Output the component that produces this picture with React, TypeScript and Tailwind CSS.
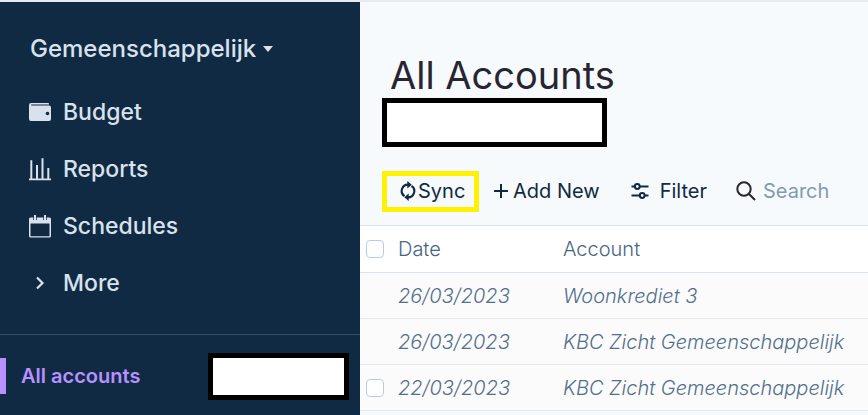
import type { ReactNode } from 'react';

function WalletIcon() {
  return (
    <svg className="h-[22px] w-[22px]" viewBox="0 0 22 22" fill="currentColor" aria-hidden="true">
      <path d="M2 1h17.200a.9.9 0 0 1 .8.9v.6H2.200v1H20a2 2 0 0 1 2 2V17a2 2 0 0 1-2 2H2a2 2 0 0 1-2-2V3a2 2 0 0 1 2-2z" />
      <circle cx="18.500" cy="11.500" r="1.800" fill="#102a43" />
    </svg>
  );
}

function ReportsIcon() {
  return (
    <svg className="h-[22px] w-[22px] overflow-visible" viewBox="0 0 22 22" fill="currentColor" aria-hidden="true">
      <path d="M0 19.500h22v1.800H0zM1.300 1.300h2v18.500h-2zM7 6h2v14H7zM12.500-.8h2v20.500h-2zM18.300 9h2v11h-2z" />
    </svg>
  );
}

function CalendarIcon() {
  return (
    <svg className="h-[22px] w-[22px] overflow-visible" viewBox="0 0 22 22" aria-hidden="true">
      <path
        fill="currentColor"
        fillRule="evenodd"
        d="M1.500 1.500H4.300V4h3.400V1.500h6.600V4h3.400V1.500h2.800A1.500 1.500 0 0 1 22 3v17a1.500 1.500 0 0 1-1.500 1.500h-19A1.500 1.500 0 0 1 0 20V3A1.500 1.500 0 0 1 1.500 1.500zM1.500 7.500v12.700h19V7.500z"
      />
      <path fill="currentColor" d="M5-1h2v5.500H5zM15-1h2v5.500h-2z" />
    </svg>
  );
}

function ChevronIcon() {
  return (
    <svg className="h-[22px] w-[22px]" viewBox="0 0 22 22" fill="none" stroke="currentColor" strokeWidth="2.200" aria-hidden="true">
      <path d="M8 4.500l5.500 5.500L8 15.500" />
    </svg>
  );
}

function SyncIcon() {
  return (
    <svg className="h-5 w-4" viewBox="0 0 16 20" aria-hidden="true">
      <g fill="none" stroke="currentColor" strokeWidth="2.100">
        <path d="M4.500 15.200A6.300 6.300 0 0 1 8.500 3.700" />
        <path d="M11.500 4.800A6.300 6.300 0 0 1 7.500 16.300" />
      </g>
      <path fill="currentColor" d="M7.300 0l4.400 3.700-4.400 3.700zM8.700 12.600l-4.400 3.700L8.700 20z" />
    </svg>
  );
}

function PlusIcon() {
  return (
    <svg className="h-4 w-4" viewBox="0 0 16 16" stroke="currentColor" strokeWidth="2" aria-hidden="true">
      <path d="M8 1v14M1 8h14" />
    </svg>
  );
}

function FilterIcon() {
  return (
    <svg className="h-[18px] w-[18px]" viewBox="0 0 18 18" fill="none" stroke="currentColor" strokeWidth="2" aria-hidden="true">
      <path d="M.5 4.500h3.300M8.800 4.500h8.700M.5 13.500h8.200M13.700 13.500h3.800" />
      <circle cx="6.300" cy="4.500" r="2.400" />
      <circle cx="11.200" cy="13.500" r="2.400" />
    </svg>
  );
}

function SearchIcon() {
  return (
    <svg className="h-5 w-5 shrink-0" viewBox="0 0 20 20" fill="none" stroke="currentColor" strokeWidth="2" aria-hidden="true">
      <circle cx="8" cy="8" r="6.700" />
      <path d="M12.700 12.700L19 19" />
    </svg>
  );
}

function NavItem({ icon, label }: { icon: ReactNode; label: string }) {
  return (
    <li>
      <a href="#" className="flex h-[57px] items-center gap-3 pl-[29px] text-[23px] font-medium">
        {icon}
        {label}
      </a>
    </li>
  );
}

function Check({ label }: { label: string }) {
  return (
    <input
      type="checkbox"
      aria-label={label}
      className="block h-[18px] w-[18px] appearance-none rounded border border-[#bcccdc] bg-white"
    />
  );
}

const rows = [
  { date: '26/03/2023', account: 'Woonkrediet 3', selectable: false },
  { date: '26/03/2023', account: 'KBC Zicht Gemeenschappelijk', selectable: false },
  { date: '22/03/2023', account: 'KBC Zicht Gemeenschappelijk', selectable: true },
];

export default function App() {
  return (
    <div className="flex min-h-screen border-t-2 border-[#e8ecf0] bg-[#f6fafd] font-['Inter',sans-serif]">
      <aside className="w-[360px] shrink-0 bg-[#102a43] text-[#d9e2ec]">
        <button type="button" className="mt-6 flex h-[46px] items-center gap-[7px] pl-[30px] text-2xl font-medium">
          Gemeenschappelijk
          <svg className="h-[6px] w-[10px]" viewBox="0 0 10 6" fill="currentColor" aria-hidden="true">
            <path d="M0 0h10L5 6z" />
          </svg>
        </button>
        <nav className="mt-3">
          <ul>
            <NavItem icon={<WalletIcon />} label="Budget" />
            <NavItem icon={<ReportsIcon />} label="Reports" />
            <NavItem icon={<CalendarIcon />} label="Schedules" />
            <NavItem icon={<ChevronIcon />} label="More" />
          </ul>
        </nav>
        <div className="mt-[22px] flex items-start justify-between border-t border-[#334e68] pt-[18px] pr-[11px]">
          <a
            href="#"
            className="mt-[5px] flex h-9 items-center border-l-6 border-[#b990ff] pl-[15px] text-xl font-semibold text-[#b990ff]"
          >
            All accounts
          </a>
          <div className="h-[47px] w-[141px] border-5 border-black bg-white" />
        </div>
      </aside>

      <main className="min-w-0 flex-1 text-[#102a43]">
        <h1 className="pt-[50px] pl-[30px] text-[38px] leading-[46px] text-[#272630]">All Accounts</h1>
        <div className="ml-[22px] h-[49px] w-[225px] border-5 border-black bg-white" />
        <div className="mt-6 flex h-[41px] items-center pl-[22px] text-xl leading-6">
          <button type="button" className="flex h-full w-[97px] items-center gap-[2px] border-5 border-[#fff200] pb-[2px] pl-[13px]">
            <SyncIcon />
            Sync
          </button>
          <button type="button" className="ml-[14px] flex items-center gap-1 pb-[2px]">
            <PlusIcon />
            Add New
          </button>
          <button type="button" className="ml-[31px] flex items-center gap-[11px] pb-[2px]">
            <FilterIcon />
            Filter
          </button>
          <label className="ml-[29px] flex min-w-0 flex-1 items-center gap-[7px] pb-[2px] text-[#272630]">
            <SearchIcon />
            <input
              type="text"
              aria-label="Search"
              placeholder="Search"
              className="w-full min-w-0 bg-transparent placeholder:text-[#829ab1]"
            />
          </label>
        </div>

        <table className="mt-[13px] w-full table-fixed border-collapse text-left text-xl">
          <thead>
            <tr className="h-[47px] border-y border-[#d9e2ec] bg-white text-[#486581]">
              <th className="w-[38px] pl-[6px]">
                <Check label="Select all" />
              </th>
              <th className="w-[165px] font-light">Date</th>
              <th className="font-light">Account</th>
            </tr>
          </thead>
          <tbody>
            {rows.map((row, i) => (
              <tr key={i} className="h-[46px] border-b border-[#e4e8ee] bg-[#fbfbfb] font-light text-[#526f8b] italic">
                <td className="pl-[6px]">{row.selectable && <Check label="Select transaction" />}</td>
                <td>{row.date}</td>
                <td className="truncate">{row.account}</td>
              </tr>
            ))}
          </tbody>
        </table>
      </main>
    </div>
  );
}
